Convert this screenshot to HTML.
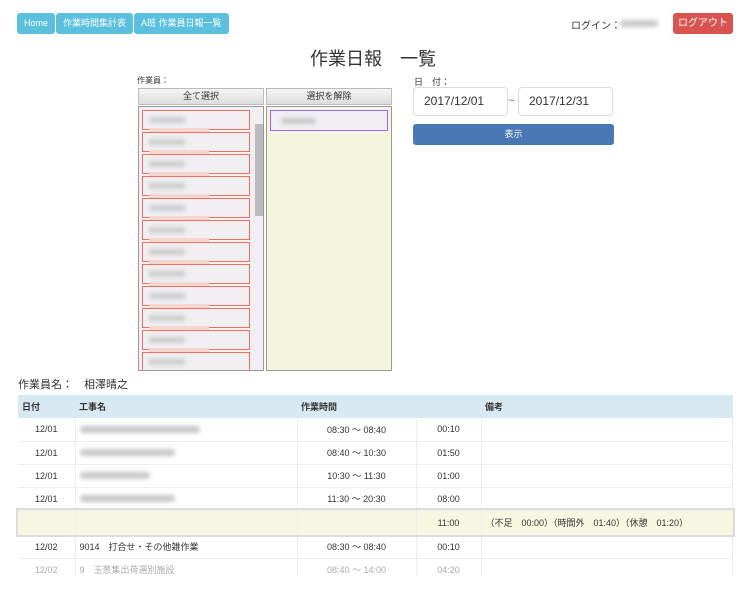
<!DOCTYPE html><html><head><meta charset="utf-8"><style>
*{box-sizing:border-box}body{margin:0;width:750px;height:598px;background:#fff;font-family:"Liberation Sans","Noto Sans CJK JP",sans-serif;color:#333;position:relative;overflow:hidden}
.a{position:absolute}
.nav{left:17px;top:13px;height:21px;display:flex}
.nav div{background:#5bc0de;color:#fff;font-size:9px;line-height:21px;padding:0 7px;margin-right:1px;border-radius:3px}
.blur{background:#c8c8c8;filter:blur(2px);height:7px;border-radius:3px}
.btn{background:linear-gradient(#f4f4f4,#ddd);border:1px solid #bbb;font-size:9px;text-align:center;line-height:15px}
.item{position:absolute;left:3px;width:108px;height:20px;border:1px solid #f07060;background:#f1eff2}
.item:before{content:"";position:absolute;left:6px;top:6px;width:36px;height:6px;background:#ccc;filter:blur(2px)}
.item:after{content:"";position:absolute;left:6px;top:17px;width:60px;height:6px;background:#f6d5cf}
.inp{border:1px solid #ddd;border-radius:4px;height:29px;font-size:12px;line-height:27px;padding-left:10px;color:#333}
table{border-collapse:collapse;font-size:9px;position:absolute;left:18px;top:395px;width:715px}
td{height:23px;border-bottom:1px solid #eee;border-right:1px solid #eee;padding:0 4px;text-align:center}
th{background:#d9e9f4;height:23px;text-align:left;padding-left:4px;font-weight:bold;font-size:9px}
</style></head><body>
<div class="a nav"><div>Home</div><div>作業時間集計表</div><div>A班 作業員日報一覧</div></div>
<div class="a" style="left:571px;top:17px;font-size:10px">ログイン：</div>
<div class="a blur" style="left:620px;top:20px;width:38px"></div>
<div class="a" style="left:673px;top:13px;width:60px;height:21px;background:#d9534f;color:#fff;font-size:10px;line-height:21px;text-align:center;border-radius:3px">ログアウト</div>
<div class="a" style="left:310px;top:45px;font-size:18px;color:#333">作業日報　一覧</div>
<div class="a" style="left:137px;top:75px;font-size:8px">作業員：</div>
<div class="a btn" style="left:138px;top:88px;width:126px">全て選択</div>
<div class="a btn" style="left:266px;top:88px;width:126px">選択を解除</div>
<div class="a" style="left:138px;top:106px;width:126px;height:265px;border:1px solid #999;background:#f1eff2;overflow:hidden">
<div class="item" style="top:3px"></div><div class="item" style="top:25px"></div><div class="item" style="top:47px"></div><div class="item" style="top:69px"></div><div class="item" style="top:91px"></div><div class="item" style="top:113px"></div><div class="item" style="top:135px"></div><div class="item" style="top:157px"></div><div class="item" style="top:179px"></div><div class="item" style="top:201px"></div><div class="item" style="top:223px"></div><div class="item" style="top:245px"></div>
<div class="a" style="left:116px;top:17px;width:8px;height:92px;background:#bbb"></div>
</div>
<div class="a" style="left:266px;top:106px;width:126px;height:265px;border:1px solid #999;background:#f3f6dc">
<div class="a" style="left:3px;top:3px;width:118px;height:21px;border:1px solid #9966ff;background:#f1eff2"><div class="a blur" style="left:10px;top:7px;width:35px;height:6px"></div></div></div>
<div class="a" style="left:414px;top:75px;font-size:9px">日　付：</div>
<div class="a inp" style="left:413px;top:87px;width:95px">2017/12/01</div>
<div class="a" style="left:508px;top:95px;font-size:11px;color:#666">~</div>
<div class="a inp" style="left:518px;top:87px;width:95px">2017/12/31</div>
<div class="a" style="left:413px;top:124px;width:201px;height:21px;background:#4a78b5;color:#fff;font-size:9px;line-height:21px;text-align:center;border-radius:3px">表示</div>
<div class="a" style="left:18px;top:376px;font-size:11px">作業員名：　相澤晴之</div>
<table>
<tr><th style="width:57px">日付</th><th style="width:222px">工事名</th><th style="width:119px">作業時間</th><th style="width:65px"></th><th>備考</th></tr>
<tr><td>12/01</td><td></td><td>08:30 ～ 08:40</td><td>00:10</td><td></td></tr>
<tr><td>12/01</td><td></td><td>08:40 ～ 10:30</td><td>01:50</td><td></td></tr>
<tr><td>12/01</td><td></td><td>10:30 ～ 11:30</td><td>01:00</td><td></td></tr>
<tr><td>12/01</td><td></td><td>11:30 ～ 20:30</td><td>08:00</td><td></td></tr>
<tr style="background:#f7f7e1;outline:2px solid #ddd"><td style="height:25px"></td><td></td><td></td><td>11:00</td><td style="text-align:left">（不足　00:00）（時間外　01:40）（休憩　01:20）</td></tr>
<tr><td>12/02</td><td style="text-align:left">9014　打合せ・その他雑作業</td><td>08:30 ～ 08:40</td><td>00:10</td><td></td></tr>
<tr style="color:#aaa"><td style="height:16px">12/02</td><td style="text-align:left">9　玉葱集出荷選別施設</td><td>08:40 ～ 14:00</td><td>04:20</td><td></td></tr>
</table>
<div class="a blur" style="left:80px;top:426px;width:120px"></div>
<div class="a blur" style="left:80px;top:449px;width:95px"></div>
<div class="a blur" style="left:80px;top:472px;width:70px"></div>
<div class="a blur" style="left:80px;top:495px;width:95px"></div>
<div class="a" style="left:0;top:576px;width:750px;height:22px;background:#fff"></div>
</body></html>
